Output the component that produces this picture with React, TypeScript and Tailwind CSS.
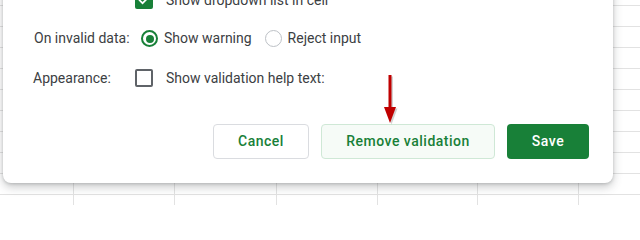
import React from 'react';

const font = { fontFamily: 'Roboto, "Liberation Sans", sans-serif' };

const GridBackground = () => {
  const widths = [74, 101, 102, 101, 100, 101, 61];
  return (
    <div className="flex h-[205px] w-[640px] flex-col overflow-hidden bg-white">
      <div className="h-[6px] shrink-0 border-b border-[#e2e2e2]" />
      {Array.from({ length: 10 }).map((_, r) => (
        <div key={r} className="flex h-[21px] shrink-0">
          {widths.map((w, c) => (
            <div
              key={c}
              className={`h-full border-b border-[#e2e2e2] ${c < widths.length - 1 ? 'border-r' : ''}`}
              style={{ width: w }}
            />
          ))}
        </div>
      ))}
    </div>
  );
};

const Checkbox = ({ checked }: { checked?: boolean }) =>
  checked ? (
    <span className="flex h-[18px] w-[18px] shrink-0 items-center justify-center rounded-[2px] bg-[#188038]">
      <svg width="14" height="14" viewBox="0 0 24 24" fill="none">
        <path d="M4.5 12.5l5 5L20 7" stroke="white" strokeWidth="3" strokeLinecap="square" />
      </svg>
    </span>
  ) : (
    <span className="block h-[18px] w-[18px] shrink-0 rounded-[2px] border-2 border-[#5f6368]" />
  );

const Radio = ({ checked }: { checked?: boolean }) =>
  checked ? (
    <span className="flex h-[17px] w-[17px] shrink-0 items-center justify-center rounded-full border-2 border-[#188038]">
      <span className="block h-[8px] w-[8px] rounded-full bg-[#188038]" />
    </span>
  ) : (
    <span className="block h-[17px] w-[17px] shrink-0 rounded-full border border-[#bdc1c6]" />
  );

const Arrow = () => (
  <svg className="absolute left-[380px] top-[72px]" width="20" height="56" viewBox="0 0 20 56">
    <g opacity="0.25" transform="translate(1.5 1.5)">
      <rect x="8.5" y="3" width="3" height="34" fill="#555" />
      <path d="M4 35h12l-6 16z" fill="#555" />
    </g>
    <rect x="8.5" y="3" width="3" height="34" fill="#c00000" />
    <path d="M4 35h12l-6 16z" fill="#c00000" />
  </svg>
);

export default function App() {
  return (
    <div className="relative h-[205px] w-[640px] overflow-hidden" style={font}>
      <GridBackground />
      <div className="absolute left-[3px] top-[-20px] flex h-[203px] w-[610px] flex-col rounded-b-[8px] bg-white shadow-[0_4px_10px_rgba(60,64,67,0.28),0_1px_3px_rgba(60,64,67,0.2)]">
        <div className="flex h-[40px] items-center pl-[31px] text-[14px] text-[#3c4043]">
          <span className="w-[101px]" />
          <Checkbox checked />
          <span className="ml-[13px]">Show dropdown list in cell</span>
        </div>
        <div className="flex h-[37px] items-center pl-[31px] text-[14px] text-[#3c4043]">
          <span className="w-[107px]">On invalid data:</span>
          <Radio checked />
          <span className="ml-[6px]">Show warning</span>
          <span className="ml-[13px] flex">
            <Radio />
          </span>
          <span className="ml-[6px]">Reject input</span>
        </div>
        <div className="flex h-[42px] items-center pl-[30px] text-[14px] text-[#3c4043]">
          <span className="w-[102px]">Appearance:</span>
          <Checkbox />
          <span className="ml-[13px]">Show validation help text:</span>
        </div>
        <div className="mt-[25px] flex justify-end gap-[12px] pr-[24px] text-[14px] font-medium tracking-[0.5px]">
          <button className="h-[35px] w-[96px] rounded-[4px] border border-[#dadce0] bg-white text-[#188038]">
            Cancel
          </button>
          <button className="h-[35px] w-[174px] rounded-[4px] border border-[#cfe8d6] bg-[#f6fbf7] text-[#188038]">
            Remove validation
          </button>
          <button className="h-[35px] w-[82px] rounded-[4px] bg-[#188038] text-white">Save</button>
        </div>
      </div>
      <Arrow />
    </div>
  );
}
